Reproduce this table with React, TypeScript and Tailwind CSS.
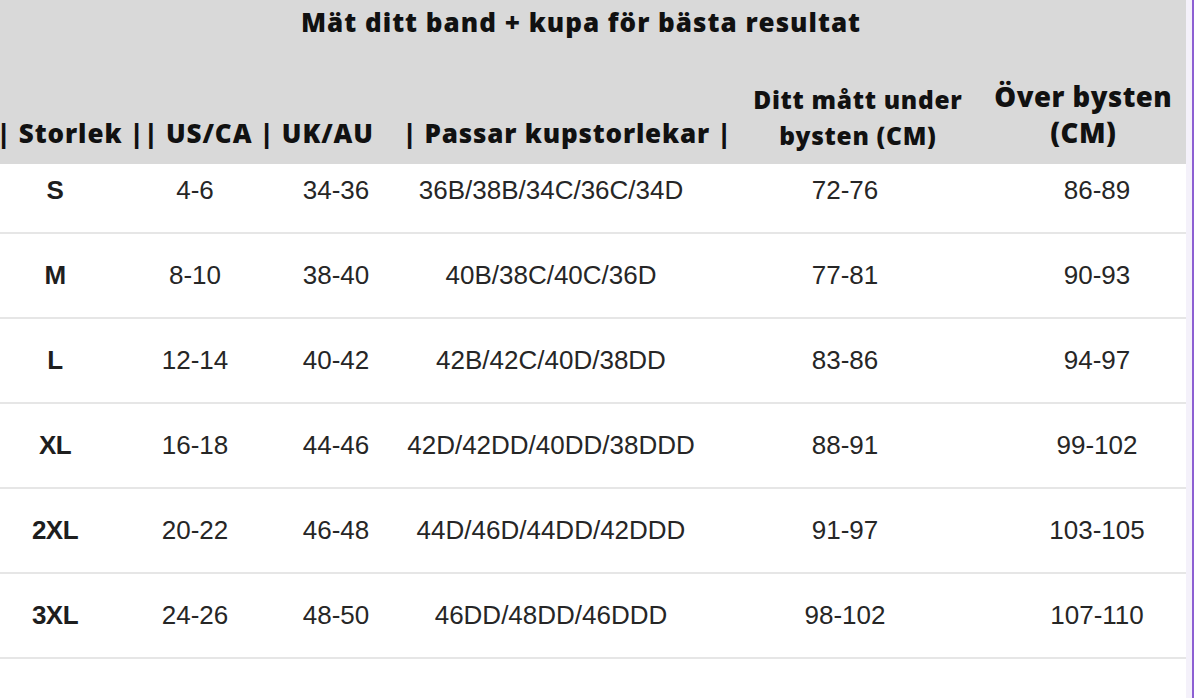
import React from "react";

const rows = [
  ["S", "4-6", "34-36", "36B/38B/34C/36C/34D", "72-76", "86-89"],
  ["M", "8-10", "38-40", "40B/38C/40C/36D", "77-81", "90-93"],
  ["L", "12-14", "40-42", "42B/42C/40D/38DD", "83-86", "94-97"],
  ["XL", "16-18", "44-46", "42D/42DD/40DD/38DDD", "88-91", "99-102"],
  ["2XL", "20-22", "46-48", "44D/46D/44DD/42DDD", "91-97", "103-105"],
  ["3XL", "24-26", "48-50", "46DD/48DD/46DDD", "98-102", "107-110"],
];

const head = "font-['Open_Sans','Noto_Sans',sans-serif] font-extrabold text-[#111]";

export default function App() {
  return (
    <div className="w-[1194px] h-[698px] overflow-hidden bg-white flex">
      <div className="w-[1186px] flex flex-col">
        <div className="bg-[#d9d9d9] h-[164px] flex flex-col">
          <div className={`${head} h-[44px] flex items-center justify-center pr-[24px] text-[26px] tracking-[1px]`}>
            Mät ditt band + kupa för bästa resultat
          </div>
          <div className={`${head} h-[120px] flex items-end pb-[10px]`}>
            <div className="w-[392px] -ml-[3px] text-[26px] tracking-[0.9px] leading-[36px] mb-[3px] whitespace-pre">
              | Storlek || US/CA | UK/AU
            </div>
            <div className="w-[348px] pl-[15px] text-[26px] tracking-[0.8px] leading-[36px] mb-[3px] whitespace-pre">
              | Passar kupstorlekar |
            </div>
            <div className="w-[246px] text-center text-[24.5px] tracking-[0.7px] leading-[36px]">
              <div>Ditt mått under</div>
              <div>bysten (CM)</div>
            </div>
            <div className="w-[206px] text-center text-[27.5px] tracking-[0.5px] leading-[36px] mb-[3px]">
              <div>Över bysten</div>
              <div>(CM)</div>
            </div>
          </div>
        </div>
        <div className="flex flex-col font-['Liberation_Sans','Arial',sans-serif] text-[26px] text-[#262626]">
          {rows.map((r, i) => (
            <div
              key={i}
              className={`grid grid-cols-[110px_170px_112px_318px_270px_206px] items-center border-b-2 border-[#e6e6e6] ${
                i === 0 ? "h-[70px] pb-[16px]" : "h-[85px]"
              }`}
            >
              <div className="text-center font-bold text-[#1e1e1e] tracking-[-0.5px]">{r[0]}</div>
              <div className="text-center">{r[1]}</div>
              <div className="text-center">{r[2]}</div>
              <div className="text-center">{r[3]}</div>
              <div className="text-center">{r[4]}</div>
              <div className="text-center pl-[28px]">{r[5]}</div>
            </div>
          ))}
        </div>
      </div>
      <div className="w-[6px] bg-[#f4f1fa]" />
      <div className="w-[2px] bg-[#8d5fd3]" />
    </div>
  );
}
